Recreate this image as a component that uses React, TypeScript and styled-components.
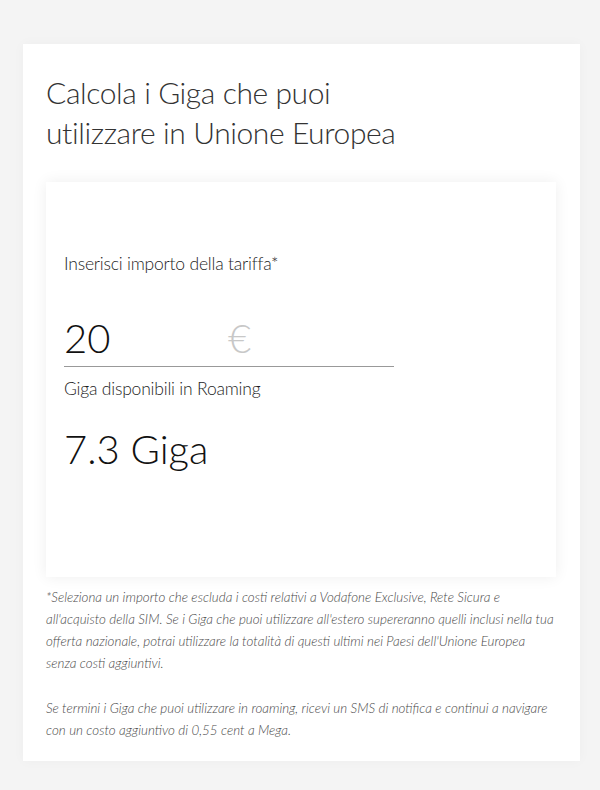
import React from "react";
import styled, { createGlobalStyle } from "styled-components";

const GlobalStyle = createGlobalStyle`
  html, body {
    margin: 0;
    padding: 0;
    background: #f4f4f4;
  }
  body {
    font-family: Lato, "Open Sans", sans-serif;
    color: #333;
  }
`;

function App() {
  return (
    <Page>
      <GlobalStyle />
      <Card>
        <Title>
          Calcola i Giga che puoi
          <br />
          utilizzare in Unione Europea
        </Title>
        <Calculator>
          <FieldLabel>Inserisci importo della tariffa*</FieldLabel>
          <AmountRow>
            <Amount>20</Amount>
            <Currency>€</Currency>
          </AmountRow>
          <FieldLabel>Giga disponibili in Roaming</FieldLabel>
          <Result>7.3 Giga</Result>
        </Calculator>
        <Notes>
          <Note>
            *Seleziona un importo che escluda i costi relativi a Vodafone Exclusive, Rete Sicura e
            <br />
            all'acquisto della SIM. Se i Giga che puoi utilizzare all'estero supereranno quelli inclusi nella tua
            <br />
            offerta nazionale, potrai utilizzare la totalità di questi ultimi nei Paesi dell'Unione Europea
            <br />
            senza costi aggiuntivi.
          </Note>
          <Note>
            Se termini i Giga che puoi utilizzare in roaming, ricevi un SMS di notifica e continui a navigare
            <br />
            con un costo aggiuntivo di 0,55 cent a Mega.
          </Note>
        </Notes>
      </Card>
    </Page>
  );
}

export default App;

const Page = styled.div`
  padding: 44px 20px 30px 23px;
  min-height: 790px;
  box-sizing: border-box;
`;

const Card = styled.div`
  width: 557px;
  background: #fff;
  box-sizing: border-box;
  padding: 28px 24px 20px 23px;
  box-shadow: 0 0 12px rgba(0, 0, 0, 0.03);
`;

const Title = styled.h1`
  margin: 0;
  font-weight: 300;
  font-size: 30px;
  line-height: 40px;
  color: #333;
  letter-spacing: -0.4px;
`;

const Calculator = styled.div`
  margin-top: 30px;
  height: 395px;
  box-sizing: border-box;
  padding: 71px 18px 0 18px;
  background: #fff;
  box-shadow: 0 0 14px rgba(0, 0, 0, 0.07);
`;

const FieldLabel = styled.div`
  font-size: 17.5px;
  font-weight: 300;
  line-height: 22px;
  color: #1e1e1e;
  letter-spacing: -0.2px;
`;

const AmountRow = styled.div`
  display: flex;
  align-items: flex-end;
  width: 330px;
  margin-top: 40px;
  margin-bottom: 11px;
  border-bottom: 1px solid #999;
  padding-bottom: 5px;
`;

const Amount = styled.span`
  width: 164px;
  font-size: 40px;
  font-weight: 300;
  line-height: 46px;
  color: #111;
`;

const Currency = styled.span`
  font-size: 40px;
  font-weight: 300;
  line-height: 46px;
  color: #c8c8c8;
`;

const Result = styled.div`
  margin-top: 24px;
  font-size: 40px;
  font-weight: 300;
  line-height: 50px;
  color: #111;
`;

const Notes = styled.div`
  margin-top: 9px;
  display: flex;
  flex-direction: column;
  gap: 23px;
`;

const Note = styled.p`
  margin: 0;
  font-size: 13.4px;
  font-style: italic;
  font-weight: 300;
  line-height: 22px;
  color: #4a4a4a;
  white-space: nowrap;
`;
